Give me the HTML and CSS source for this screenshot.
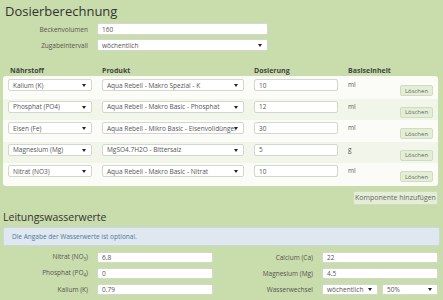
FILE: index.html
```
<!DOCTYPE html>
<html lang="de">
<head>
  <meta charset="UTF-8">
  <title>Dosierberechnung</title>
  <link rel="stylesheet" href="styles.css">
</head>
<body>

  <h1 class="title">Dosierberechnung</h1>

  <!-- Grunddaten -->
  <div class="base-form">
    <label class="lbl">Beckenvolumen</label>
    <input class="field" type="text" value="160">
    <label class="lbl">Zugabeintervall</label>
    <div class="sel">wöchentlich</div>
  </div>

  <!-- Komponenten -->
  <div class="comp-head">
    <span class="first">Nährstoff</span>
    <span>Produkt</span>
    <span>Dosierung</span>
    <span>Basiseinheit</span>
  </div>
  <div class="comp-box">
    <div class="comp-row">
      <div class="sel">Kalium (K)</div>
      <div class="sel">Aqua Rebell - Makro Spezial - K</div>
      <input class="field" type="text" value="10">
      <span class="unit">ml</span>
      <button class="btn-del">Löschen</button>
    </div>
    <div class="comp-row">
      <div class="sel">Phosphat (PO4)</div>
      <div class="sel">Aqua Rebell - Makro Basic - Phosphat</div>
      <input class="field" type="text" value="12">
      <span class="unit">ml</span>
      <button class="btn-del">Löschen</button>
    </div>
    <div class="comp-row">
      <div class="sel">Eisen (Fe)</div>
      <div class="sel">Aqua Rebell - Mikro Basic - Eisenvolldünger</div>
      <input class="field" type="text" value="30">
      <span class="unit">ml</span>
      <button class="btn-del">Löschen</button>
    </div>
    <div class="comp-row">
      <div class="sel">Magnesium (Mg)</div>
      <div class="sel">MgSO4.7H2O - Bittersalz</div>
      <input class="field" type="text" value="5">
      <span class="unit">g</span>
      <button class="btn-del">Löschen</button>
    </div>
    <div class="comp-row">
      <div class="sel">Nitrat (NO3)</div>
      <div class="sel">Aqua Rebell - Makro Basic - Nitrat</div>
      <input class="field" type="text" value="10">
      <span class="unit">ml</span>
      <button class="btn-del">Löschen</button>
    </div>
  </div>
  <div class="add-line">
    <button class="btn-add">Komponente hinzufügen</button>
  </div>

  <!-- Leitungswasser -->
  <h2 class="subtitle">Leitungswasserwerte</h2>
  <div class="alert">Die Angabe der Wasserwerte ist optional.</div>

  <div class="water-form">
    <label class="lbl">Nitrat (NO<sub>3</sub>)</label>
    <input class="field" type="text" value="6.8">
    <label class="lbl">Calcium (Ca)</label>
    <input class="field" type="text" value="22">

    <label class="lbl">Phosphat (PO<sub>4</sub>)</label>
    <input class="field" type="text" value="0">
    <label class="lbl">Magnesium (Mg)</label>
    <input class="field" type="text" value="4.5">

    <label class="lbl">Kalium (K)</label>
    <input class="field" type="text" value="0.79">
    <label class="lbl">Wasserwechsel</label>
    <div class="pair">
      <div class="sel">wöchentlich</div>
      <div class="sel">50%</div>
    </div>
  </div>

</body>
</html>
```

FILE: styles.css
```
body {
  margin: 0;
  padding: 0 3px;
  background-color: #c9dcab;
  font-family: 'Open Sans', 'Noto Sans', sans-serif;
  font-size: 6.5px;
  color: #555;
}

.title {
  margin: 0;
  padding: 2px 0 0 2px;
  font-size: 13px;
  font-weight: 400;
  line-height: 19px;
  color: #333;
}

.lbl {
  text-align: right;
  color: #555;
}

.field, .sel {
  box-sizing: border-box;
  height: 12px;
  margin: 0;
  padding: 0 4px;
  background-color: #fff;
  border: 1px solid #d3d8cc;
  border-radius: 2px;
  font-family: inherit;
  font-size: 6.5px;
  color: #555;
  outline: none;
}

.sel {
  position: relative;
  display: flex;
  align-items: center;
  min-width: 0;
  white-space: nowrap;
  overflow: hidden;
}

.sel::after {
  content: '';
  position: absolute;
  right: 5px;
  top: 4px;
  border-left: 2px solid transparent;
  border-right: 2px solid transparent;
  border-top: 3px solid #222;
}

.base-form {
  display: grid;
  grid-template-columns: 85px 171px;
  column-gap: 9px;
  row-gap: 4px;
  align-items: center;
  margin-top: 2px;
}

.comp-head, .comp-row {
  display: grid;
  grid-template-columns: 84px 142px 84px 1fr auto;
  column-gap: 10px;
  padding: 0 5px;
}

.comp-head {
  margin-top: 14px;
  height: 11px;
  align-items: center;
  font-size: 7px;
  font-weight: 700;
  color: #444;
}

.comp-head .first {
  padding-left: 2px;
}

.comp-box {
  width: 435px;
  box-sizing: border-box;
  padding: 1px 0;
  background-color: #fbfcf8;
  border-radius: 3px;
}

.comp-row {
  height: 21.6px;
  padding-top: 2px;
  box-sizing: border-box;
}

.comp-row:nth-child(even) {
  background-color: #f1f5ea;
}

.unit {
  padding-top: 1px;
  color: #555;
}

.btn-del, .btn-add {
  font-family: inherit;
  color: #666;
  background-color: #e4eed6;
  border: 1px solid #cfdcbd;
  border-radius: 2px;
  padding: 0;
}

.btn-del {
  width: 33px;
  height: 11px;
  margin-top: 6px;
  font-size: 6px;
}

.add-line {
  display: flex;
  justify-content: flex-end;
  width: 435px;
  margin-top: 5px;
}

.btn-add {
  width: 85px;
  height: 14px;
  font-size: 7px;
}

.subtitle {
  margin: 4px 0 0;
  font-size: 10.5px;
  font-weight: 400;
  line-height: 16px;
  color: #333;
}

.alert {
  box-sizing: border-box;
  height: 19px;
  margin-top: 2px;
  padding: 0 8px;
  display: flex;
  align-items: center;
  background-color: #dfe7ef;
  border: 1px solid #c9d6e3;
  border-radius: 2px;
  color: #4d78a3;
}

.water-form {
  display: grid;
  grid-template-columns: 85px 116px 91px 116px;
  column-gap: 9px;
  row-gap: 5px;
  align-items: center;
  margin-top: 6px;
}

.water-form .field, .water-form .sel {
  height: 11px;
}

.water-form .sel::after {
  top: 3.5px;
}

.water-form sub {
  font-size: 4.5px;
}

.pair {
  display: flex;
  gap: 4px;
}

.pair .sel {
  flex: 1;
}
```
